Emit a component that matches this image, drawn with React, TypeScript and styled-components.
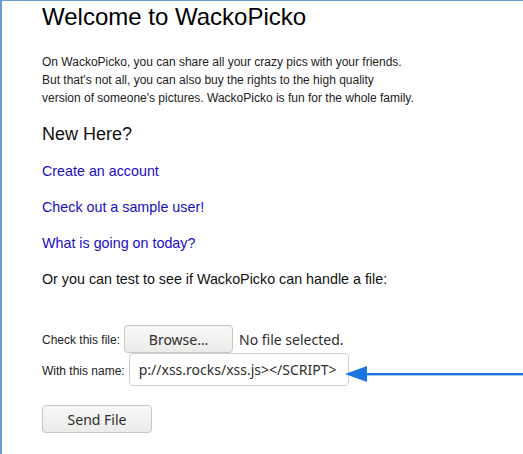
import React from "react";
import styled, { createGlobalStyle } from "styled-components";

const GlobalStyle = createGlobalStyle`
  html, body { margin: 0; padding: 0; background: #ffffff; }
  body { font-family: "Liberation Sans", Arial, sans-serif; color: #111; }
  * { box-sizing: border-box; }
`;

const Page = styled.div`
  position: relative;
  min-height: 454px;
  border-left: 2px solid #6a9bd8;
  border-top: 1px solid #6a9bd8;
  padding: 2px 0 0 40px;
  overflow: hidden;
`;

const Title = styled.h1`
  margin: 0 0 22px;
  font-size: 24px;
  line-height: 28px;
  font-weight: normal;
  color: #000;
`;

const Intro = styled.p`
  margin: 0 0 17px;
  font-size: 12px;
  line-height: 18px;
  color: #222;
`;

const SubTitle = styled.h2`
  margin: 0 0 18px;
  font-size: 18px;
  line-height: 21px;
  font-weight: normal;
  color: #111;
`;

const LinkLine = styled.a`
  display: block;
  width: max-content;
  margin: 0 0 20px;
  font-size: 14.3px;
  line-height: 16px;
  color: #1a0dbf;
  text-decoration: none;
`;

const TextLine = styled.div`
  font-size: 14.3px;
  line-height: 16px;
  color: #111;
  margin: 0 0 38px;
`;

const Form = styled.form`
  display: flex;
  flex-direction: column;
  align-items: flex-start;
`;

const Row = styled.div`
  display: flex;
  align-items: center;
  gap: 4px;
`;

const Label = styled.label`
  font-size: 12px;
  color: #222;
  padding-top: 2px;
`;

const Button = styled.button<{ $width: number }>`
  width: ${(p) => p.$width}px;
  height: 28px;
  border: 1px solid #c6c6c6;
  border-radius: 4px;
  background: linear-gradient(#f7f7f6, #ebebea);
  font-family: "Noto Sans", "Open Sans", sans-serif;
  font-size: 14px;
  color: #2e2e2e;
  padding: 0;
  cursor: pointer;
`;

const FileStatus = styled.span`
  margin-left: 2px;
  font-family: "Noto Sans", "Open Sans", sans-serif;
  font-size: 14px;
  color: #2e2e2e;
`;

const TextInput = styled.input`
  width: 220px;
  height: 33px;
  border: 1px solid #cfcfcf;
  border-radius: 4px;
  padding: 0 9px;
  font-family: "Noto Sans", "Open Sans", sans-serif;
  font-size: 14px;
  color: #2e2e2e;
  background: #fff;
  outline: none;
`;

const SendRow = styled.div`
  margin-top: 19px;
`;

const Arrow = styled.svg`
  position: absolute;
  left: 343px;
  top: 364px;
`;

export default function App() {
  return (
    <>
      <GlobalStyle />
      <Page>
        <Title>Welcome to WackoPicko</Title>
        <Intro>
          On WackoPicko, you can share all your crazy pics with your friends.
          <br />
          But that's not all, you can also buy the rights to the high quality
          <br />
          version of someone's pictures. WackoPicko is fun for the whole family.
        </Intro>
        <SubTitle>New Here?</SubTitle>
        <LinkLine href="#">Create an account</LinkLine>
        <LinkLine href="#">Check out a sample user!</LinkLine>
        <LinkLine href="#">What is going on today?</LinkLine>
        <TextLine>Or you can test to see if WackoPicko can handle a file:</TextLine>
        <Form onSubmit={(e) => e.preventDefault()}>
          <Row>
            <Label>Check this file:</Label>
            <Button type="button" $width={109}>Browse…</Button>
            <FileStatus>No file selected.</FileStatus>
          </Row>
          <Row>
            <Label>With this name:</Label>
            <TextInput readOnly defaultValue="p://xss.rocks/xss.js></SCRIPT>" />
          </Row>
          <SendRow>
            <Button type="submit" $width={110}>Send File</Button>
          </SendRow>
        </Form>
        <Arrow width="180" height="18" viewBox="0 0 180 18">
          <polygon points="0,9 22,1 22,17" fill="#1a75e0" />
          <rect x="20" y="8" width="160" height="2.4" fill="#1a75e0" />
        </Arrow>
      </Page>
    </>
  );
}
